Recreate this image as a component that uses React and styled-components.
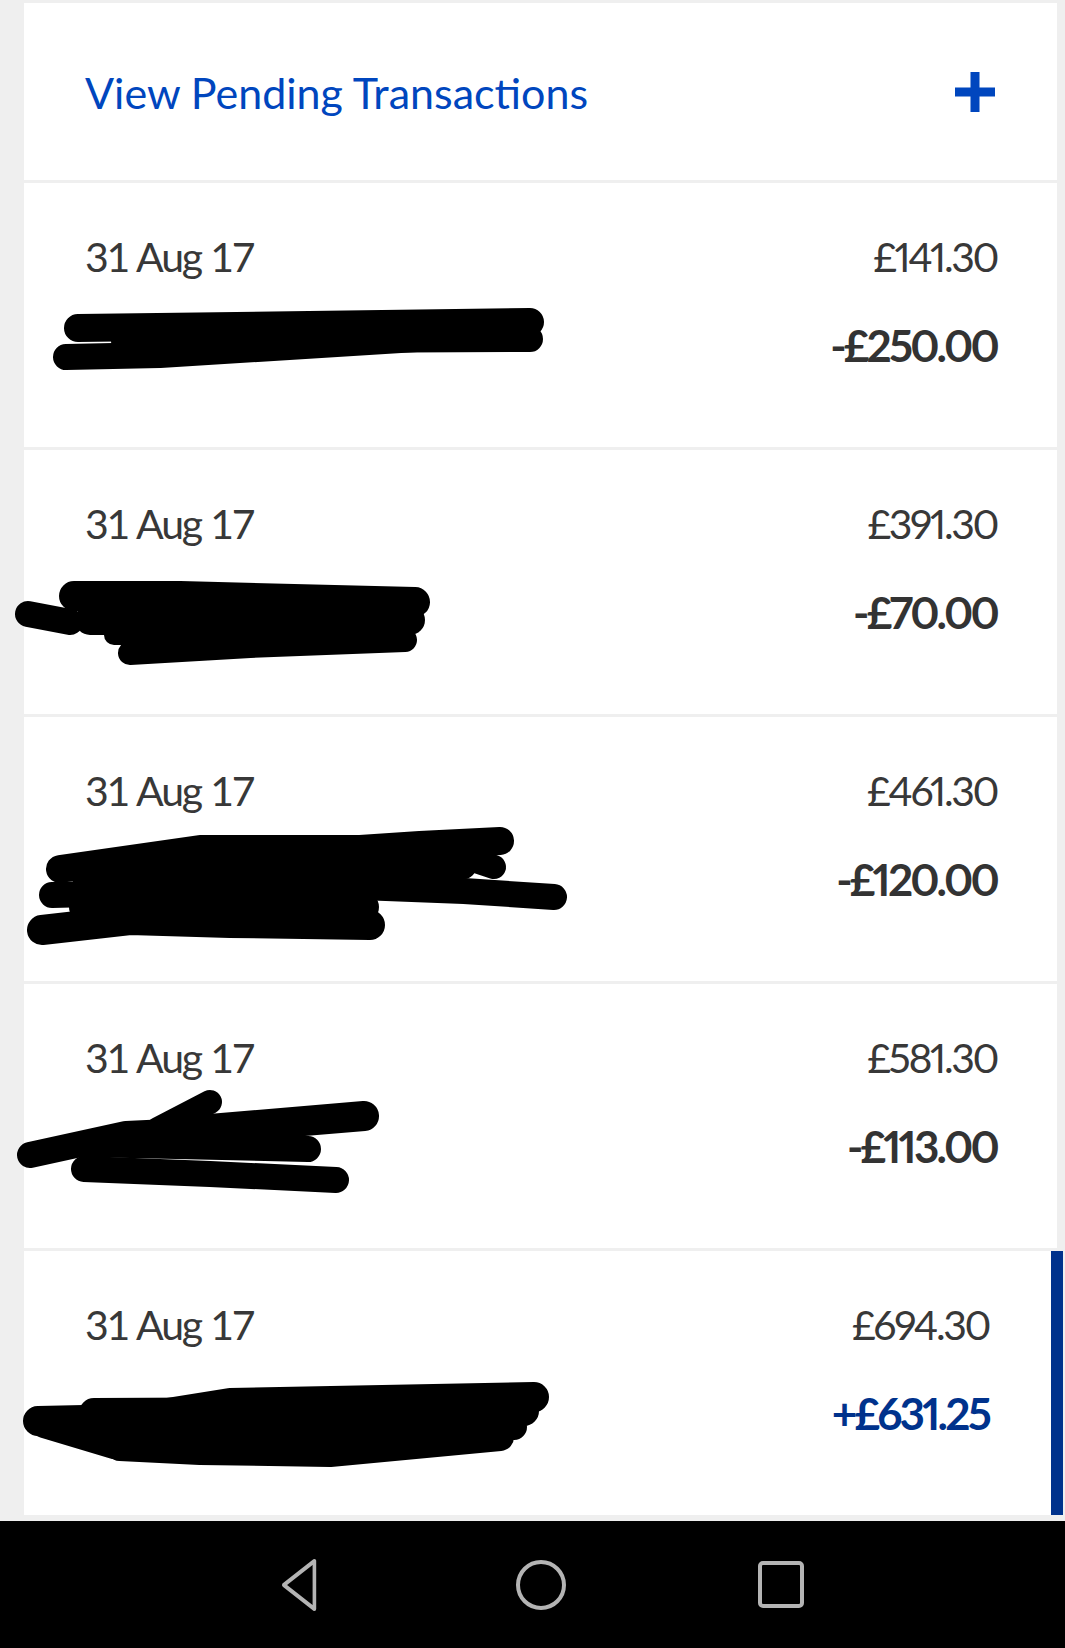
import React from 'react'
import styled, { createGlobalStyle } from 'styled-components'

const GlobalStyle = createGlobalStyle`
  html, body {
    margin: 0;
    padding: 0;
    background: #efefef;
  }
  body {
    font-family: Lato, "Open Sans", sans-serif;
    -webkit-font-smoothing: antialiased;
  }
`

const transactions = [
  {
    date: '31 Aug 17',
    balance: '£141.30',
    amount: '-£250.00',
    strokes: [
      { d: 'M54 145 L506 139', w: 28 },
      { d: 'M42 174 L136 172 L456 152', w: 26 },
      { d: 'M100 158 L506 156', w: 26 },
    ],
  },
  {
    date: '31 Aug 17',
    balance: '£391.30',
    amount: '-£70.00',
    strokes: [
      { d: 'M4 164 L46 172', w: 26 },
      { d: 'M50 146 L156 146 L391 152', w: 30 },
      { d: 'M66 170 L386 170', w: 30 },
      { d: 'M106 203 L226 196 L381 190', w: 24 },
      { d: 'M90 185 L370 185', w: 20 },
    ],
  },
  {
    date: '31 Aug 17',
    balance: '£461.30',
    amount: '-£120.00',
    strokes: [
      { d: 'M36 152 L176 132 L336 132 L396 128 L476 124', w: 28 },
      { d: 'M28 178 L336 170 L440 174 L530 180', w: 26 },
      { d: 'M18 213 L106 203 L206 206 L346 208', w: 30 },
      { d: 'M60 190 L340 190', w: 30 },
      { d: 'M60 160 L440 150', w: 24 },
      { d: 'M440 140 L470 150', w: 24 },
    ],
  },
  {
    date: '31 Aug 17',
    balance: '£581.30',
    amount: '-£113.00',
    strokes: [
      { d: 'M6 171 L102 150 L207 145', w: 26 },
      { d: 'M134 145 L186 118', w: 24 },
      { d: 'M186 145 L340 132', w: 30 },
      { d: 'M60 160 L284 165', w: 26 },
      { d: 'M60 185 L186 190 L312 196', w: 26 },
    ],
  },
  {
    date: '31 Aug 17',
    balance: '£694.30',
    amount: '+£631.25',
    credit: true,
    strokes: [
      { d: 'M14 170 L106 168 L206 152 L510 146', w: 30 },
      { d: 'M70 162 L500 160', w: 30 },
      { d: 'M96 196 L176 200 L306 202 L476 186', w: 28 },
      { d: 'M20 174 L90 195', w: 26 },
      { d: 'M100 182 L490 176', w: 26 },
    ],
  },
]

const Screen = styled.div`
  width: 1065px;
  min-height: 1648px;
  display: flex;
  flex-direction: column;
  background: #efefef;
`

const List = styled.div`
  display: flex;
  flex-direction: column;
  gap: 3px;
  padding: 3px 8px 0 24px;
`

const PendingCard = styled.div`
  height: 177px;
  background: #fff;
  display: flex;
  align-items: center;
  justify-content: space-between;
  padding: 0 62px 0 61px;
  box-sizing: border-box;
`

const PendingTitle = styled.span`
  font-size: 43px;
  color: #0046be;
  line-height: 1;
  padding-top: 2px;
`

const PlusIcon = styled.svg`
  width: 40px;
  height: 40px;
  display: block;
`

const Row = styled.div`
  position: relative;
  height: 264px;
  background: #fff;
  box-sizing: border-box;
  padding: 53px ${p => (p.$selected ? '62px' : '60px')} 0 61px;
  margin-right: ${p => (p.$selected ? '-6px' : '0')};
  border-right: ${p => (p.$selected ? '12px solid #00328c' : 'none')};
  display: grid;
  grid-template-columns: 1fr auto;
  grid-template-rows: 42px 42px;
  row-gap: 45px;
`

const DateText = styled.span`
  font-size: 41px;
  line-height: 1;
  color: #383838;
  letter-spacing: -2.2px;
  word-spacing: 1px;
`

const Balance = styled.span`
  font-size: 41px;
  line-height: 1;
  color: #383838;
  letter-spacing: -2.4px;
  font-variant-numeric: proportional-nums;
  text-align: right;
`

const Amount = styled.span`
  grid-column: 2;
  font-size: 44px;
  font-weight: 700;
  line-height: 1;
  letter-spacing: -2.8px;
  font-variant-numeric: proportional-nums;
  text-align: right;
  color: ${p => (p.$credit ? '#00328c' : '#333')};
`

const Redaction = styled.svg`
  position: absolute;
  left: 0;
  top: 0;
  width: 600px;
  height: 264px;
  overflow: visible;
  pointer-events: none;
`

const NavBar = styled.nav`
  margin-top: 6px;
  height: 127px;
  background: #000;
  display: flex;
  align-items: center;
  justify-content: center;
  gap: 140px;
  padding-left: 16px;
`

const NavSlot = styled.div`
  width: 100px;
  display: flex;
  justify-content: center;
`

const NavIcon = styled.svg`
  width: 56px;
  height: 56px;
  display: block;
`

const App = () => {
  return (
    <Screen>
      <GlobalStyle />
      <List>
        <PendingCard>
          <PendingTitle>View Pending Transactions</PendingTitle>
          <PlusIcon viewBox="0 0 40 40">
            <rect x="15.5" y="0" width="9" height="40" fill="#0046be" />
            <rect x="0" y="15.5" width="40" height="9" fill="#0046be" />
          </PlusIcon>
        </PendingCard>
        {transactions.map((t, i) => (
          <Row key={i} $selected={t.credit}>
            <DateText>{t.date}</DateText>
            <Balance>{t.balance}</Balance>
            <Amount $credit={t.credit}>{t.amount}</Amount>
            <Redaction viewBox="0 0 600 264">
              {t.strokes.map((s, j) => (
                <path
                  key={j}
                  d={s.d}
                  stroke="#000"
                  strokeWidth={s.w}
                  strokeLinecap="round"
                  strokeLinejoin="round"
                  fill="none"
                />
              ))}
            </Redaction>
          </Row>
        ))}
      </List>
      <NavBar>
        <NavSlot>
          <NavIcon viewBox="0 0 56 56">
            <path d="M40 4 L40 52 L6 28 Z" fill="none" stroke="#b4b4b4" strokeWidth="4" strokeLinejoin="round" transform="scale(0.9 1) translate(6 0)" />
          </NavIcon>
        </NavSlot>
        <NavSlot>
          <NavIcon viewBox="0 0 56 56">
            <circle cx="28" cy="28" r="23" fill="none" stroke="#b4b4b4" strokeWidth="4" />
          </NavIcon>
        </NavSlot>
        <NavSlot>
          <NavIcon viewBox="0 0 56 56">
            <rect x="7" y="6" width="42" height="43" rx="3" fill="none" stroke="#b4b4b4" strokeWidth="4" />
          </NavIcon>
        </NavSlot>
      </NavBar>
    </Screen>
  )
}

export default App
